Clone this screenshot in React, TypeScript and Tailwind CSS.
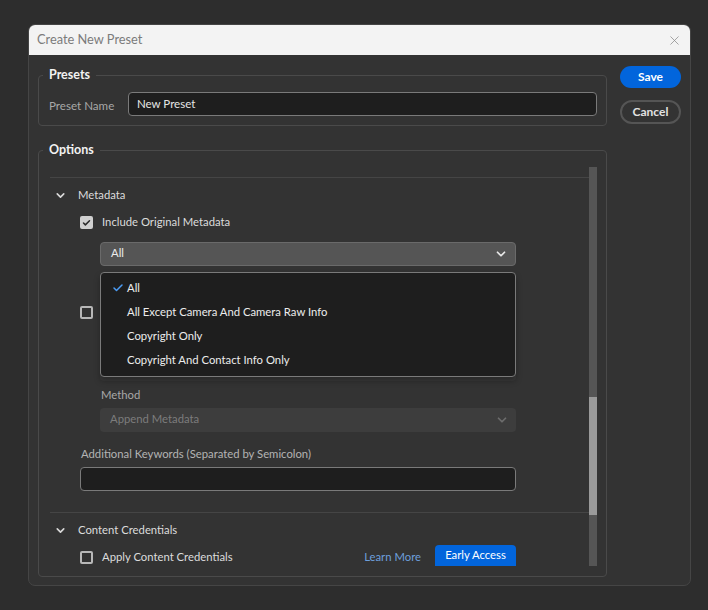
import { Check, ChevronDown, X } from "lucide-react";

const font = { fontFamily: "Lato, 'Liberation Sans', sans-serif" };

const Checkbox = ({ checked }: { checked?: boolean }) => (
  <span
    className={`flex h-[13px] w-[13px] shrink-0 items-center justify-center rounded-[2px] border-2 ${
      checked ? "border-[#d0d0d0] bg-[#d0d0d0]" : "border-[#b8b8b8] bg-transparent"
    }`}
  >
    {checked && <Check className="h-[10px] w-[10px] text-[#2a2a2a]" strokeWidth={4} />}
  </span>
);

const SectionHeader = ({ title }: { title: string }) => (
  <div className="flex h-[36px] items-center">
    <ChevronDown className="ml-[4px] h-[13px] w-[13px] text-[#d8d8d8]" strokeWidth={3} />
    <span className="ml-[11px] text-[11.3px] text-[#dcdcdc]">{title}</span>
  </div>
);

const menuItems = [
  "All",
  "All Except Camera And Camera Raw Info",
  "Copyright Only",
  "Copyright And Contact Info Only",
];

export default function App() {
  return (
    <div className="h-[610px] w-[708px] bg-[#2d2d2d] pl-[28px] pt-[24px]" style={font}>
      <div className="flex h-[562px] w-[663px] flex-col overflow-hidden rounded-[7px] border border-[#454545] bg-[#333333]">
        {/* title bar */}
        <div className="flex h-[30px] shrink-0 items-center justify-between bg-[#f3f3f3] pl-[8px] pr-[8px]">
          <span className="text-[12.8px] text-[#7b7b7b]">Create New Preset</span>
          <X className="h-[15px] w-[15px] text-[#8a8a8a]" strokeWidth={1.2} />
        </div>

        <div className="flex flex-1 gap-[13px] pl-[9px] pr-[9px]">
          {/* left column */}
          <div className="flex w-[569px] flex-col">
            <fieldset className="mt-[11px] rounded-[4px] border border-[#4a4a4a] pb-[9px]">
              <legend className="ml-[4px] px-[6px] text-[12.5px] font-bold text-[#f2f2f2]">Presets</legend>
              <div className="mt-[7px] flex items-center pl-[10px] pr-[9px]">
                <span className="w-[79px] pt-[4px] text-[11.6px] text-[#a8a8a8]">Preset Name</span>
                <div className="flex h-[24px] flex-1 items-center rounded-[4px] border border-[#7a7a7a] bg-[#1e1e1e] px-[8px] text-[11.5px] text-[#e6e6e6]">
                  New Preset
                </div>
              </div>
            </fieldset>

            <fieldset className="mt-[15px] h-[436px] rounded-[4px] border border-[#4a4a4a]">
              <legend className="ml-[4px] px-[6px] text-[12.5px] font-bold text-[#f2f2f2]">Options</legend>
              <div className="mt-[7px] flex h-[399px] pl-[11px] pr-[9px]">
                {/* scroll content */}
                <div className="relative flex-1 overflow-hidden">
                  <div className="mt-[10px] border-t border-[#454545]" />
                  <SectionHeader title="Metadata" />
                  <div className="flex h-[18px] items-center pl-[30px]">
                    <Checkbox checked />
                    <span className="ml-[9px] text-[11.3px] text-[#dcdcdc]">Include Original Metadata</span>
                  </div>

                  <div className="relative ml-[50px] mt-[10px] w-[416px]">
                    <div className="flex h-[24px] items-center justify-between rounded-[4px] border border-[#6a6a6a] bg-[#555555] pl-[10px] pr-[7px]">
                      <span className="text-[11.3px] text-[#ececec]">All</span>
                      <ChevronDown className="h-[14px] w-[14px] text-[#e8e8e8]" strokeWidth={3} />
                    </div>

                    {/* open menu */}
                    <div className="absolute left-0 top-[30px] z-10 flex h-[105px] w-[416px] flex-col justify-center rounded-[4px] border border-[#7a7a7a] bg-[#1e1e1e] shadow-[0_4px_6px_rgba(0,0,0,0.3)]">
                      {menuItems.map((item, i) => (
                        <div key={item} className="flex h-[24px] items-center">
                          <span className="flex w-[26px] justify-end pr-[3px]">
                            {i === 0 && <Check className="h-[12px] w-[12px] text-[#4b9cf5]" strokeWidth={3} />}
                          </span>
                          <span className="text-[11.3px] text-[#ececec]">{item}</span>
                        </div>
                      ))}
                    </div>
                  </div>

                  {/* rows hidden beneath the menu */}
                  <div className="mt-[38px] flex h-[18px] items-center pl-[30px]">
                    <Checkbox />
                  </div>
                  <div className="ml-[50px] mt-[35px] h-[24px] w-[416px] rounded-[4px] bg-[#3a3a3a]" />

                  <div className="ml-[51px] mt-[7px] text-[11.3px] leading-[14px] text-[#a8a8a8]">Method</div>
                  <div className="ml-[50px] mt-[6px] flex h-[24px] w-[416px] items-center justify-between rounded-[4px] bg-[#3d3d3d] pl-[10px] pr-[7px]">
                    <span className="text-[11.3px] text-[#7c7c7c]">Append Metadata</span>
                    <ChevronDown className="h-[14px] w-[14px] text-[#6c6c6c]" strokeWidth={3} />
                  </div>

                  <div className="ml-[31px] mt-[15px] text-[11.3px] leading-[14px] text-[#b4b4b4]">
                    Additional Keywords (Separated by Semicolon)
                  </div>
                  <div className="ml-[30px] mt-[6px] h-[24px] w-[436px] rounded-[4px] border border-[#7a7a7a] bg-[#1e1e1e]" />

                  <div className="mt-[21px] border-t border-[#454545]" />
                  <SectionHeader title="Content Credentials" />
                  <div className="relative flex h-[18px] items-center pl-[30px]">
                    <Checkbox />
                    <span className="ml-[9px] text-[11.3px] text-[#dcdcdc]">Apply Content Credentials</span>
                    <span className="ml-auto mr-[14px] text-[11.3px] text-[#6d9fdc]">Learn More</span>
                    <span className="-mt-[4px] mr-[73px] flex h-[22px] w-[81px] items-center justify-center rounded-t-[4px] bg-[#0265dc] pb-[1px] text-[11.3px] text-white">
                      Early Access
                    </span>
                  </div>
                </div>

                {/* scrollbar */}
                <div className="flex w-[8px] flex-col bg-[#555555]">
                  <div className="h-[230px]" />
                  <div className="h-[118px] bg-[#9a9a9a]" />
                </div>
              </div>
            </fieldset>
          </div>

          {/* right column */}
          <div className="flex w-[61px] flex-col gap-[12px] pt-[11px]">
            <button className="flex h-[22px] items-center justify-center rounded-full bg-[#0265dc] text-[12px] font-bold text-white">
              Save
            </button>
            <button className="flex h-[24px] items-center justify-center rounded-full border-2 border-[#555555] text-[12px] font-bold text-[#e2e2e2]">
              Cancel
            </button>
          </div>
        </div>
      </div>
    </div>
  );
}
